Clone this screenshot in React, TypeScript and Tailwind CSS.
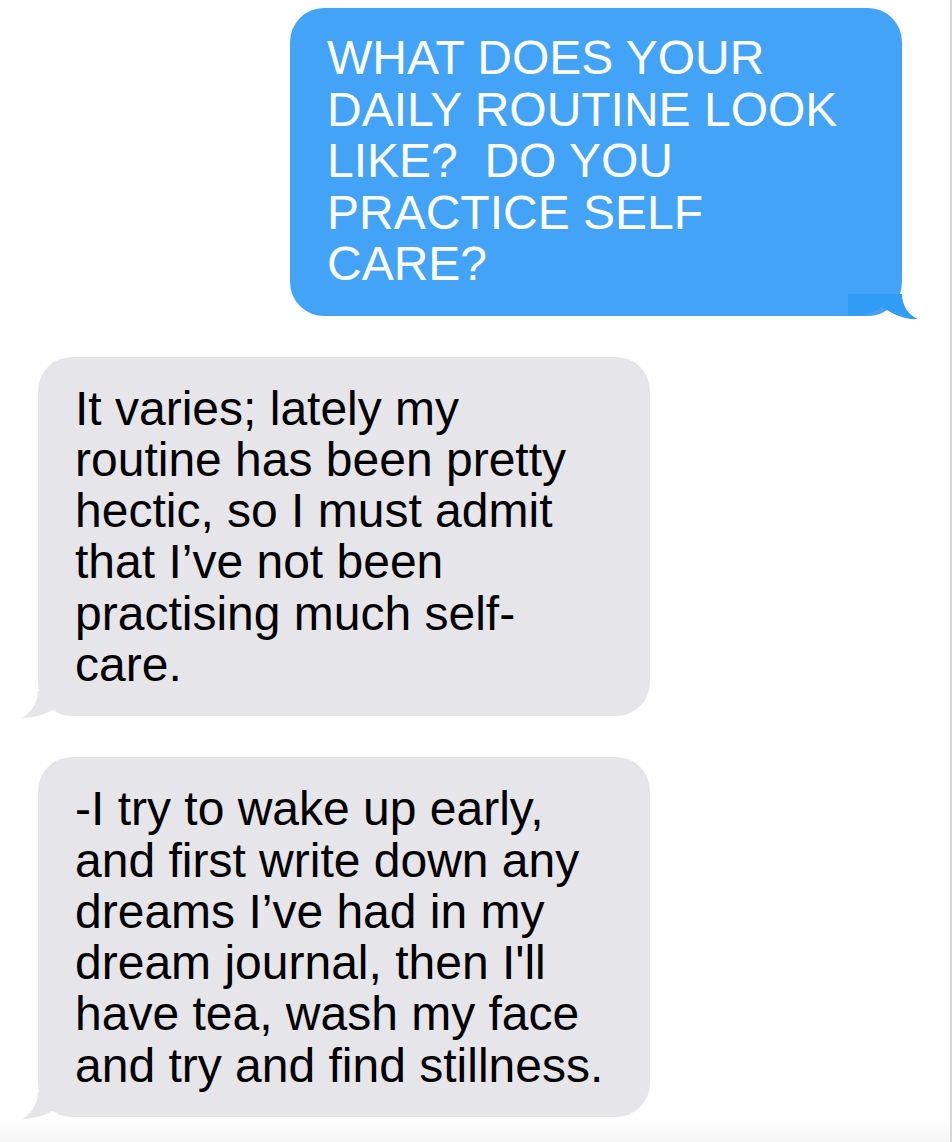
import React from 'react';

const FONT = { fontFamily: '"Liberation Sans", Arial, Helvetica, sans-serif' };

const question = ['WHAT DOES YOUR', 'DAILY ROUTINE LOOK', 'LIKE?  DO YOU', 'PRACTICE SELF', 'CARE?'];

const replies = [
  [
    'It varies; lately my',
    'routine has been pretty',
    'hectic, so I must admit',
    'that I\u2019ve not been',
    'practising much self-',
    'care.',
  ],
  [
    '-I try to wake up early,',
    'and first write down any',
    'dreams I\u2019ve had in my',
    "dream journal, then I'll",
    'have tea, wash my face',
    'and try and find stillness.',
  ],
];

// 发出的气泡（蓝色，右侧）
const SentBubble = ({ lines }: { lines: string[] }) => (
  <div className="relative w-[612px] rounded-[34px] bg-[#43a3f7] pl-[37px] pr-[20px] pt-[24px] pb-[26px] text-white">
    {lines.map(l => (
      <div key={l} className="whitespace-pre text-[48px] leading-[51.5px]">{l}</div>
    ))}
    {/* 尾巴 */}
    <svg className="absolute left-[558px] top-[calc(100%-25px)]" width="72" height="31" viewBox="0 0 72 31">
      <path d="M0,3 H54 C54,14 60,24 70,28 C58,29 46,24 34,16 C26,22 14,25 0,25 Z" fill="#319cf6" />
    </svg>
  </div>
);

// 收到的气泡（灰色，左侧）
const ReceivedBubble = ({ lines }: { lines: string[] }) => (
  <div className="relative w-[612px] rounded-[34px] bg-[#e5e5ea] pl-[37px] pr-[20px] pt-[26px] pb-[26px] text-black">
    {lines.map(l => (
      <div key={l} className="whitespace-pre text-[48px] leading-[51.3px]">{l}</div>
    ))}
    <svg className="absolute left-[-16px] top-[calc(100%-25px)]" width="60" height="29" viewBox="2 0 60 29">
      <path d="M18,0 L62,0 L62,25 C50,25 44,22 38,15 C28,23 14,27 2,27 C11,22 18,12 18,0 Z" fill="#e5e5ea" />
    </svg>
  </div>
);

export default function App() {
  return (
    <div className="flex min-h-[1142px] w-[952px] flex-col border-r-2 border-[#d8d8d8] bg-white" style={FONT}>
      <div className="flex justify-end pt-[8px] pr-[48px]">
        <SentBubble lines={question} />
      </div>
      <div className="flex flex-col gap-[41px] pt-[41px] pl-[38px]">
        {replies.map((r, i) => (
          <ReceivedBubble key={i} lines={r} />
        ))}
      </div>
      <div className="flex-1 bg-gradient-to-b from-white to-[#f6f6f6]" />
    </div>
  );
}
